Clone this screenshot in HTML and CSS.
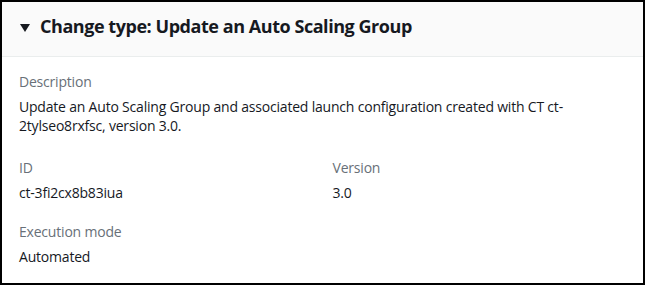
FILE: index.html
```html
<!DOCTYPE html>
<html lang="en">
<head>
  <meta charset="UTF-8" />
  <title>Change type: Update an Auto Scaling Group</title>
  <link rel="stylesheet" href="styles.css">
</head>
<body>

  <div class="panel">
    <div class="panel-header">
      <svg class="caret" width="10" height="8" viewBox="0 0 10 8">
        <polygon points="0,0 10,0 5,8" fill="#16191f" />
      </svg>
      <h2>Change type: Update an Auto Scaling Group</h2>
    </div>

    <div class="panel-body">
      <div class="field field-wide">
        <div class="label">Description</div>
        <div class="value">Update an Auto Scaling Group and associated launch configuration created with CT ct-2tylseo8rxfsc, version 3.0.</div>
      </div>

      <div class="columns">
        <div class="field">
          <div class="label">ID</div>
          <div class="value">ct-3fi2cx8b83iua</div>
        </div>
        <div class="field">
          <div class="label">Version</div>
          <div class="value">3.0</div>
        </div>
      </div>

      <div class="field">
        <div class="label">Execution mode</div>
        <div class="value">Automated</div>
      </div>
    </div>
  </div>

</body>
</html>
```

FILE: styles.css
```css
html, body {
  margin: 0;
  padding: 0;
}

body {
  font-family: 'Open Sans', sans-serif;
  font-size: 14px;
  letter-spacing: -0.2px;
  color: #16191f;
  background: #fff;
}

.panel {
  width: 645px;
  height: 285px;
  box-sizing: border-box;
  border: 2px solid #000;
}

.panel-header {
  display: flex;
  align-items: center;
  height: 54px;
  padding: 0 0 0 18px;
  background: #fafafa;
  border-bottom: 1px solid #eaeded;
}

.caret {
  margin: 0 10px 2px 0;
  flex: none;
}

.panel-header h2 {
  margin: 0 0 6px;
  font-size: 18px;
  font-weight: 700;
  letter-spacing: -0.45px;
  line-height: 24px;
  color: #16191f;
}

.panel-body {
  padding: 15px 17px 0;
}

.field {
  margin-bottom: 20px;
}

.field-wide {
  margin-bottom: 23px;
}

.label {
  color: #687078;
  line-height: 20px;
  margin-bottom: 5px;
}

.value {
  line-height: 19px;
}

.columns {
  display: grid;
  grid-template-columns: 1fr 1fr;
  gap: 20px;
}
```
